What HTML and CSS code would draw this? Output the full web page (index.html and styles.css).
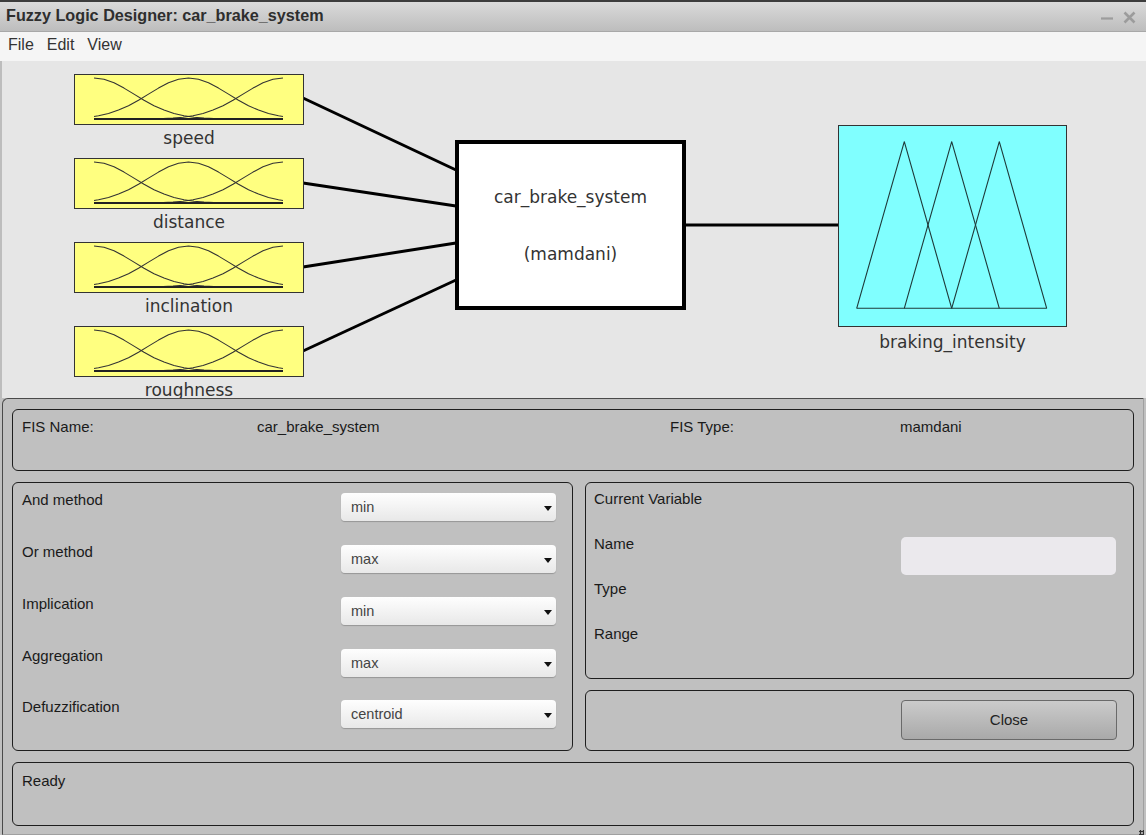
FILE: index.html
```html
<!DOCTYPE html>
<html>
<head>
<meta charset="utf-8">
<title>Fuzzy Logic Designer: car_brake_system</title>
<link rel="stylesheet" href="styles.css">
</head>
<body>
<div class="window">
  <div class="titlebar">
    <span class="title">Fuzzy Logic Designer: car_brake_system</span>
    <div class="controls">
      <svg class="ctl" width="13" height="13" viewBox="0 0 13 13"><path d="M0 7.5H12" stroke="#9c9c9c" stroke-width="2.2"/></svg>
      <svg class="ctl" width="13" height="13" viewBox="0 0 13 13"><path d="M1.5 1.5L11.5 11.5M11.5 1.5L1.5 11.5" stroke="#9c9c9c" stroke-width="2.6"/></svg>
    </div>
  </div>
  <div class="menubar">
    <span class="menu-item">File</span>
    <span class="menu-item">Edit</span>
    <span class="menu-item">View</span>
  </div>
  <div class="canvas">
    <svg class="diagram" width="1146" height="337" viewBox="0 61 1146 337">
      <defs>
        <g id="mf">
          <rect x="0.5" y="0.5" width="229" height="50" fill="#ffff80" stroke="#333" stroke-width="1"/>
          <g fill="none" stroke="#333" stroke-width="1.1" stroke-linejoin="round">
            <polyline points="20,4 30,5.3 40,8.8 50,14.1 60,20.1 70,26.2 80,31.7 90,36.1 100,39.5 110,41.7 120,43.2 130,44.1 140,44.5 150,44.8 160,45 209,45"/>
            <polyline points="20,42.5 24.5,41.7 34.5,39.5 44.5,36.1 54.5,31.7 64.5,26.2 74.5,20.1 84.5,14.1 94.5,8.8 104.5,5.3 114.5,4 124.5,5.3 134.5,8.8 144.5,14.1 154.5,20.1 164.5,26.2 174.5,31.7 184.5,36.1 194.5,39.5 204.5,41.7 209,42.5"/>
            <polyline points="209,4 199,5.3 189,8.8 179,14.1 169,20.1 159,26.2 149,31.7 139,36.1 129,39.5 119,41.7 109,43.2 99,44.1 89,44.5 79,44.8 69,45 20,45"/>
          </g>
          <line x1="20" y1="45" x2="209" y2="45" stroke="#222" stroke-width="1.8"/>
        </g>
      </defs>

      <g stroke="#000" stroke-width="3" stroke-linecap="butt">
        <line x1="303" y1="98" x2="456" y2="170"/>
        <line x1="303" y1="183" x2="456" y2="206"/>
        <line x1="303" y1="267" x2="456" y2="243"/>
        <line x1="303" y1="351" x2="456" y2="280"/>
        <line x1="685" y1="225" x2="838" y2="225"/>
      </g>

      <use href="#mf" x="74" y="74"/>
      <use href="#mf" x="74" y="158"/>
      <use href="#mf" x="74" y="242"/>
      <use href="#mf" x="74" y="326"/>

      <g class="lbl">
        <text x="189" y="144" text-anchor="middle">speed</text>
        <text x="189" y="228" text-anchor="middle">distance</text>
        <text x="189" y="312" text-anchor="middle">inclination</text>
        <text x="189" y="396" text-anchor="middle">roughness</text>
      </g>

      <rect x="457" y="142" width="227" height="166" fill="#fff" stroke="#000" stroke-width="4"/>
      <g class="lbl">
        <text x="570.5" y="203" text-anchor="middle">car_brake_system</text>
        <text x="570.5" y="259.5" text-anchor="middle">(mamdani)</text>
      </g>

      <rect x="838.5" y="125.5" width="228" height="201" fill="#80ffff" stroke="#333" stroke-width="1"/>
      <g fill="none" stroke="#1f3a3a" stroke-width="1.1" stroke-linejoin="round">
        <polyline points="856.7,308.3 904.3,141.7 951.7,308.3"/>
        <polyline points="904.3,308.3 951.7,141.7 999.3,308.3"/>
        <polyline points="951.7,308.3 999.3,141.7 1046.7,308.3"/>
        <line x1="856.7" y1="308.3" x2="1046.7" y2="308.3"/>
      </g>
      <g class="lbl">
        <text x="952.5" y="347.5" text-anchor="middle">braking_intensity</text>
      </g>
    </svg>
  </div>
  <div class="lower">
    <div class="panel fis-panel">
      <span>FIS Name:</span>
      <span>car_brake_system</span>
      <span>FIS Type:</span>
      <span>mamdani</span>
    </div>
    <div class="middle">
      <div class="panel methods">
        <div class="mrow"><span class="mlabel">And method</span><div class="select">min</div></div>
        <div class="mrow"><span class="mlabel">Or method</span><div class="select">max</div></div>
        <div class="mrow"><span class="mlabel">Implication</span><div class="select">min</div></div>
        <div class="mrow"><span class="mlabel">Aggregation</span><div class="select">max</div></div>
        <div class="mrow"><span class="mlabel">Defuzzification</span><div class="select">centroid</div></div>
      </div>
      <div class="rightcol">
        <div class="panel curvar">
          <div class="vrow vtitle">Current Variable</div>
          <div class="vrow"><span class="vlabel">Name</span><div class="name-input"></div></div>
          <div class="vrow"><span class="vlabel">Type</span></div>
          <div class="vrow"><span class="vlabel">Range</span></div>
        </div>
        <div class="panel closepanel">
          <button class="close-btn">Close</button>
        </div>
      </div>
    </div>
    <div class="panel status">Ready</div>
    <div class="grip"></div>
  </div>
</div>
</body>
</html>
```

FILE: styles.css
```css
* { box-sizing: border-box; }

html, body {
  margin: 0;
  padding: 0;
  width: 1146px;
  height: 835px;
  overflow: hidden;
  background: #c0c0c0;
}

.window {
  width: 1146px;
  height: 835px;
  display: flex;
  flex-direction: column;
  font-family: "Liberation Sans", Arial, sans-serif;
  font-size: 15px;
  color: #1a1a1a;
}

.titlebar {
  height: 32px;
  border-top: 2px solid #3c3c3c;
  border-bottom: 1px solid #a8a8a8;
  background: linear-gradient(#dadada, #bdbdbd);
  display: flex;
  align-items: center;
  justify-content: space-between;
  padding: 0 10px 2px 6px;
}

.title {
  font-weight: bold;
  font-size: 16.2px;
  color: #2e2e2e;
}

.controls {
  display: flex;
  gap: 9px;
  align-items: center;
  margin-top: 3px;
}

.menubar {
  height: 29px;
  background: #f5f5f5;
  display: flex;
  align-items: center;
  gap: 13px;
  padding: 0 0 3px 8px;
  color: #333;
  font-size: 16px;
}

.canvas {
  height: 337px;
  background: #e6e6e6;
  border-left: 2px solid #bdbdbd;
  overflow: hidden;
}

.diagram {
  display: block;
  margin-left: -2px;
}

.lbl text {
  font-family: "DejaVu Sans", sans-serif;
  font-size: 17px;
  fill: #333;
}

.lower {
  position: relative;
  flex: 1;
  margin: 0 2px 0 2px;
  background: #c0c0c0;
  border: 1px solid;
  border-color: #4a4a4a #a0a0a0 #a0a0a0 #4a4a4a;
  border-radius: 6px 0 0 0;
  padding: 10px 9px 0 9px;
  display: flex;
  flex-direction: column;
  gap: 11px;
}

.panel {
  border: 1px solid #1e1e1e;
  border-radius: 6px;
  line-height: 17px;
}

.fis-panel {
  height: 62px;
  padding: 8px 9px;
  display: grid;
  grid-template-columns: 235px 413px 230px auto;
  align-items: start;
}

.middle {
  height: 269px;
  display: flex;
  gap: 12px;
}

.methods {
  width: 561px;
  padding: 6px 15px 0 9px;
  display: flex;
  flex-direction: column;
}

.mrow {
  height: 52px;
  display: flex;
  align-items: flex-start;
}

.mrow:last-child {
  margin-top: -1px;
}

.mlabel {
  flex: 0 0 319px;
  margin-top: 2px;
}

.select {
  position: relative;
  width: 215px;
  height: 28px;
  margin-top: 4px;
  padding-left: 10px;
  line-height: 28px;
  font-size: 14.5px;
  color: #444;
  background: linear-gradient(#fefefe, #e8e8e8);
  border-radius: 4px;
  box-shadow: 0 1px 1px rgba(0, 0, 0, 0.22);
}

.select::after {
  content: "";
  position: absolute;
  right: 4px;
  top: 13px;
  border-left: 4.5px solid transparent;
  border-right: 4.5px solid transparent;
  border-top: 5px solid #111;
}

.rightcol {
  flex: 1;
  display: flex;
  flex-direction: column;
  gap: 11px;
}

.curvar {
  height: 197px;
  padding: 7px 17px 0 8px;
}

.vrow {
  height: 45px;
  display: flex;
  align-items: flex-start;
}

.vtitle {
  height: 45px;
}

.vlabel {
  flex: 1;
}

.name-input {
  width: 215px;
  height: 38px;
  margin-top: 2px;
  background: #ebe9ed;
  border-radius: 5px;
}

.closepanel {
  flex: 1;
  display: flex;
  align-items: center;
  justify-content: flex-end;
  padding: 0 16px 2px 0;
}

.close-btn {
  width: 216px;
  height: 40px;
  border: 1px solid #6a6a6a;
  border-radius: 4px;
  background: linear-gradient(#cbcbcb, #a9a9a9);
  font-family: "Liberation Sans", Arial, sans-serif;
  font-size: 15px;
  color: #222;
  padding: 0;
}

.status {
  height: 64px;
  padding: 9px 9px;
}

.grip {
  position: absolute;
  right: -1px;
  bottom: -1px;
  width: 5px;
  height: 5px;
  background: radial-gradient(circle, #333 1px, transparent 1.5px) 0 0 / 3px 3px;
}
```
